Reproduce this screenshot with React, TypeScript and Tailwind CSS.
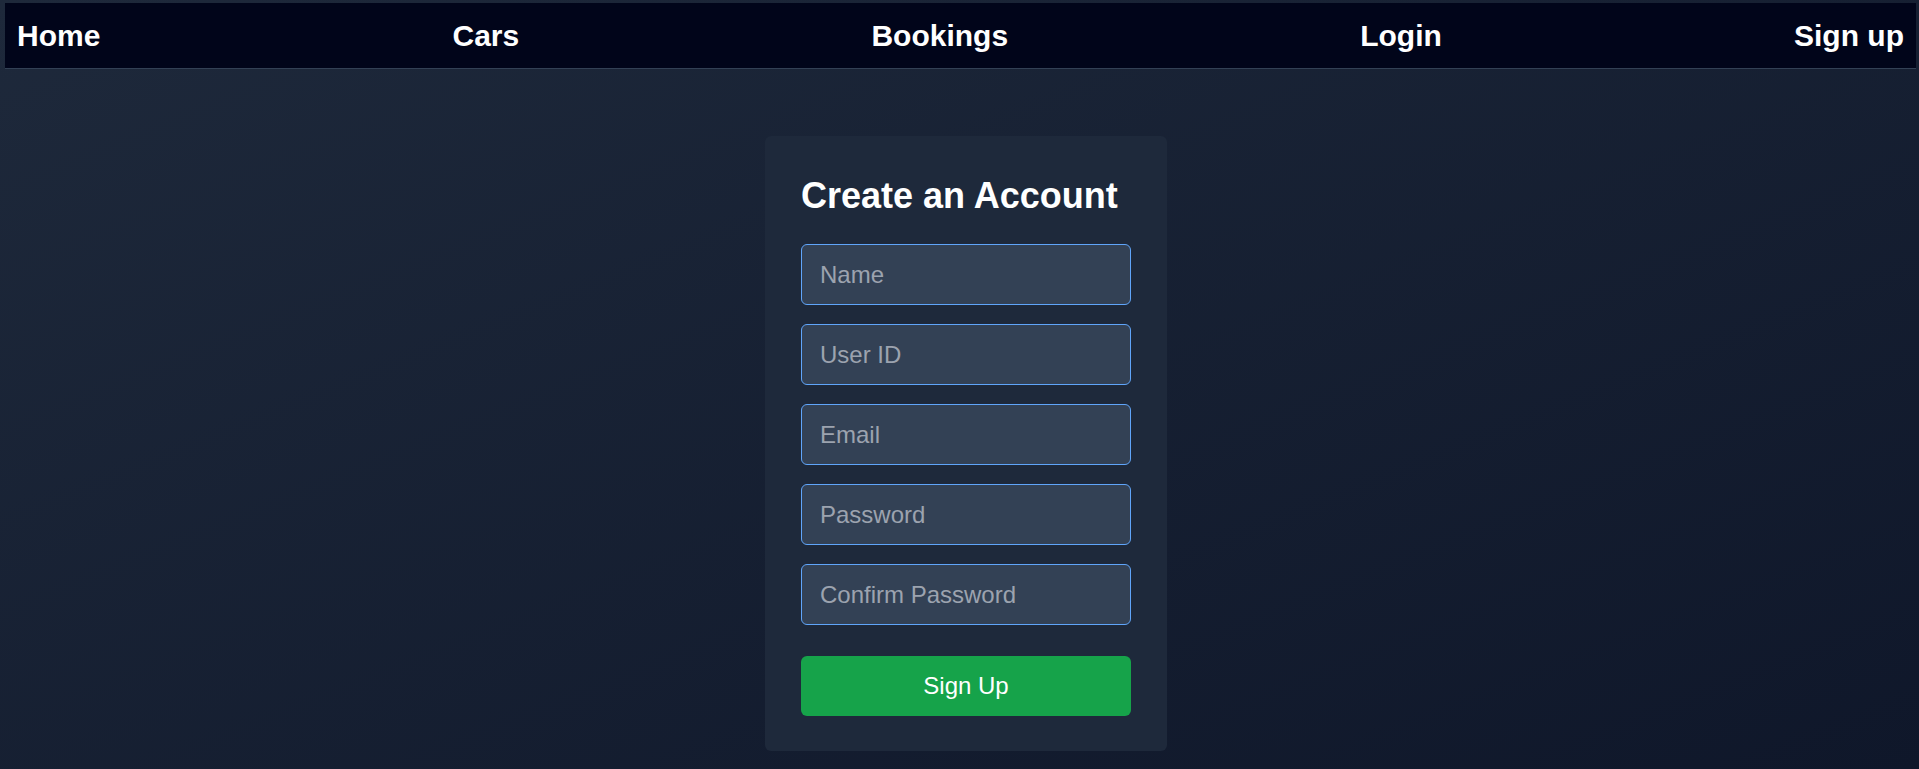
import { useState } from "react";

const navLinks = ["Home", "Cars", "Bookings", "Login", "Sign up"];

const fields = [
  { name: "name", placeholder: "Name", type: "text" },
  { name: "userId", placeholder: "User ID", type: "text" },
  { name: "email", placeholder: "Email", type: "email" },
  { name: "password", placeholder: "Password", type: "password" },
  { name: "confirm", placeholder: "Confirm Password", type: "password" },
];

export default function App() {
  const [form, setForm] = useState<Record<string, string>>({});

  return (
    <div
      className="min-h-screen bg-gradient-to-br from-[#1e293b] to-[#0f172a] pt-[3px]"
      style={{ fontFamily: '"Liberation Sans", Arial, sans-serif' }}
    >
      {/* Top nav */}
      <nav className="ml-[5px] mr-[3px] h-[66px] flex items-center justify-between px-3 bg-[#01051a] border-b border-[#334155]">
        {navLinks.map((link) => (
          <a key={link} href="#" className="text-[30px] font-bold text-white leading-none">
            {link}
          </a>
        ))}
      </nav>

      {/* Sign up card */}
      <div className="flex justify-center pt-[67px] pl-[13px]">
        <form
          onSubmit={(e) => e.preventDefault()}
          className="w-[402px] bg-[#1e293b] rounded-md px-9 pt-[40px] pb-[35px]"
        >
          <h1 className="text-4xl font-bold text-white leading-10 mb-[28px]">Create an Account</h1>

          <div className="flex flex-col gap-[19px]">
            {fields.map((f) => (
              <input
                key={f.name}
                type={f.type}
                placeholder={f.placeholder}
                value={form[f.name] ?? ""}
                onChange={(e) => setForm({ ...form, [f.name]: e.target.value })}
                className="h-[61px] w-full rounded-md border border-[#60a5fa] bg-[#334155] px-[18px] text-2xl text-white placeholder:text-[#9ca3af] outline-none"
              />
            ))}
          </div>

          <button
            type="submit"
            className="mt-[31px] h-[60px] w-full rounded-md bg-[#16a34a] text-2xl text-white"
          >
            Sign Up
          </button>
        </form>
      </div>
    </div>
  );
}
